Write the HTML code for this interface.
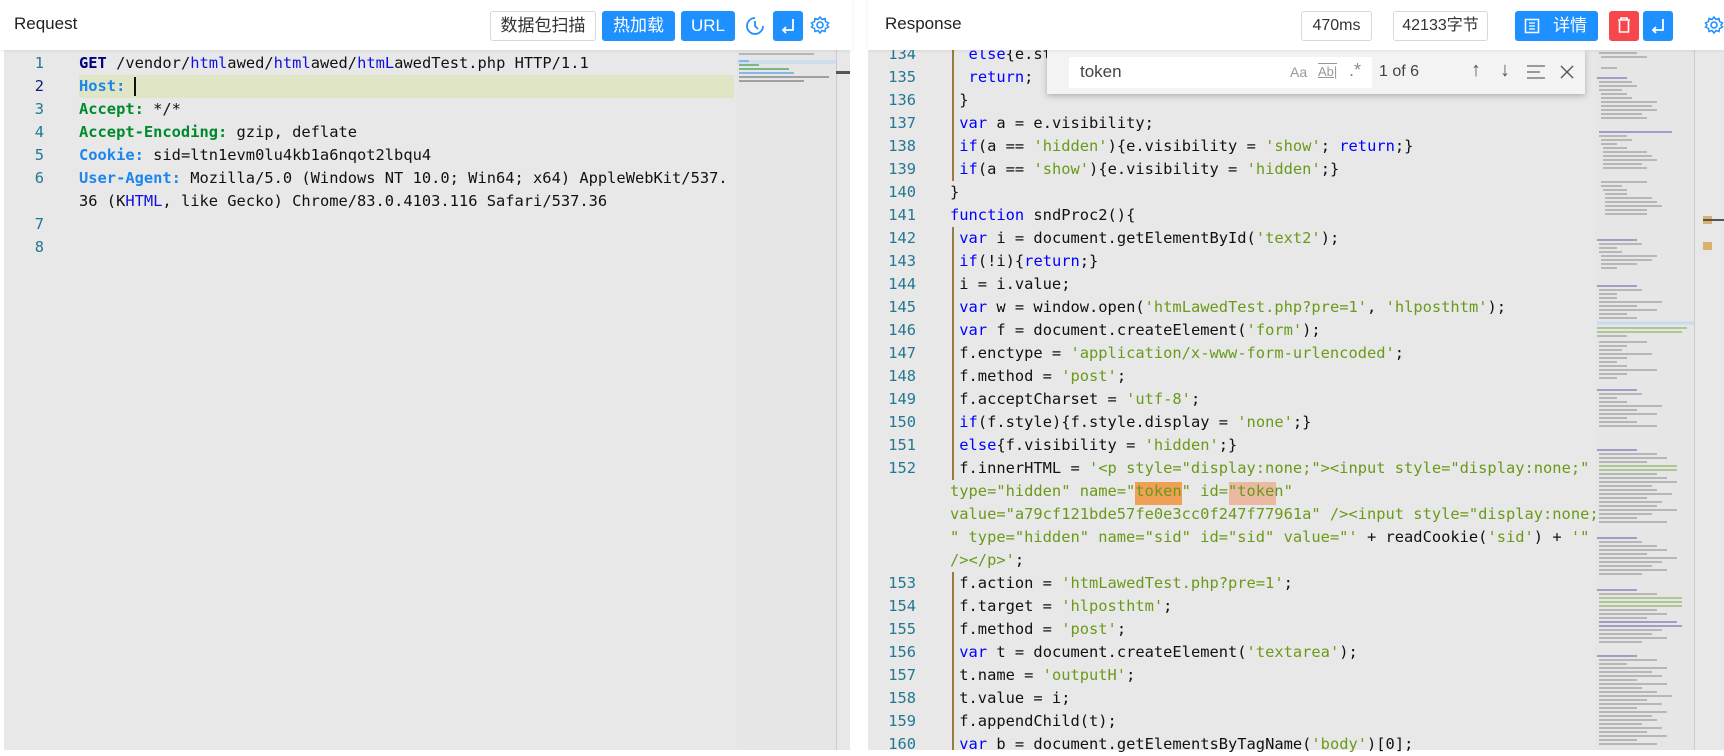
<!DOCTYPE html>
<html><head><meta charset="utf-8">
<style>
*{box-sizing:border-box;margin:0;padding:0}
body{width:1724px;height:750px;overflow:hidden;background:#fff;font-family:"Liberation Sans","Noto Sans CJK SC",sans-serif;position:relative}
.hdr{position:absolute;top:0;height:50px;background:#fff;box-shadow:0 1px 3px rgba(0,0,0,.08);z-index:5}
.title{position:absolute;top:14px;font-size:17px;color:#222}
.btn{position:absolute;top:11px;height:30px;border-radius:3px;font-size:17px;line-height:30px;text-align:center;color:#fff;background:#1e90ff}
.wbtn{background:#fff;color:#333;border:1px solid #d8d8d8;line-height:28px}
.ed{position:absolute;top:50px;bottom:0;background:#e8e8e8;overflow:hidden}
.mono{font-family:"DejaVu Sans Mono","Liberation Mono",monospace;font-size:15.4px;white-space:pre;position:absolute;height:23px;line-height:23px;color:#111}
.ln{font-family:"DejaVu Sans Mono","Liberation Mono",monospace;font-size:15.4px;position:absolute;height:23px;line-height:23px;color:#237893;text-align:right}
.k{color:#0000ff}.s{color:#6a9a1a}.g{color:#008a2e;font-weight:bold}.b{color:#1c86ee;font-weight:bold}.n{color:#000080;font-weight:bold}.u{color:#1010e0}
.gd{position:absolute;left:952px;width:1.5px;height:23px;background:#9a7a44}
</style></head><body>

<!-- LEFT -->
<div class="hdr" style="left:0;width:852px">
 <div class="title" style="left:14px">Request</div>
 <div class="btn wbtn" style="left:490px;width:106px">数据包扫描</div>
 <div class="btn" style="left:602px;width:73px">热加载</div>
 <div class="btn" style="left:681px;width:54px">URL</div>
 <svg style="position:absolute;left:745px;top:16px" width="20" height="20" viewBox="0 0 20 20"><path d="M10 2a8 8 0 1 0 8 8" fill="none" stroke="#1e90ff" stroke-width="1.8"/><path d="M10 5v5l3 3" fill="none" stroke="#1e90ff" stroke-width="1.8"/></svg>
 <div class="btn" style="left:773px;width:30px"><svg width="30" height="30" viewBox="0 0 30 30"><path d="M20 8v11H10M13 16l-3 3 3 3" fill="none" stroke="#fff" stroke-width="1.8"/></svg></div>
 <svg style="position:absolute;left:810px;top:15px" width="20" height="20" viewBox="0 0 20 20"><circle cx="10" cy="10" r="3" fill="none" stroke="#1e90ff" stroke-width="1.6"/><path d="M10 2l2 2.5 3-1 .5 3 3 1.5-1.5 2 1.5 2-3 1.5-.5 3-3-1-2 2.5-2-2.5-3 1-.5-3-3-1.5 1.5-2-1.5-2 3-1.5.5-3 3 1z" fill="none" stroke="#1e90ff" stroke-width="1.5"/></svg>
</div>
<div class="ed" style="left:4px;width:846px">
 <div style="position:absolute;left:75px;top:25px;width:655px;height:23px;background:#e0e5c6"></div>
 <div style="position:absolute;left:130px;top:27px;width:2px;height:19px;background:#111"></div>
 <div style="position:absolute;left:733px;top:0;width:99px;height:700px;background:#e6e6e6"></div>
 <div style="position:absolute;left:733px;top:10px;width:99px;height:4px;background:#cfdff0"></div>
 <svg style="position:absolute;left:735px;top:2px" width="95" height="30"><g stroke-width="1.2"><line x1="0" y1="2" x2="75" y2="2" stroke="#99a"/><line x1="0" y1="9" x2="10" y2="9" stroke="#4a9ee8"/><line x1="0" y1="13" x2="20" y2="13" stroke="#3a9a50"/><line x1="0" y1="17" x2="50" y2="17" stroke="#3a9a50"/><line x1="0" y1="21" x2="55" y2="21" stroke="#4a9ee8"/><line x1="0" y1="25" x2="90" y2="25" stroke="#777"/><line x1="0" y1="29" x2="65" y2="29" stroke="#777"/></g></svg>
 <div style="position:absolute;left:832px;top:0;width:1px;height:700px;background:#ccc"></div>
 <div style="position:absolute;left:832px;top:21px;width:14px;height:3px;background:#555"></div>
 <div class="ln" style="left:0;width:40px;top:2px">1</div>
 <div class="ln" style="left:0;width:40px;top:25px;color:#0b216f">2</div>
 <div class="ln" style="left:0;width:40px;top:48px">3</div>
 <div class="ln" style="left:0;width:40px;top:71px">4</div>
 <div class="ln" style="left:0;width:40px;top:94px">5</div>
 <div class="ln" style="left:0;width:40px;top:117px">6</div>
 <div class="ln" style="left:0;width:40px;top:163px">7</div>
 <div class="ln" style="left:0;width:40px;top:186px">8</div>
 <div class="mono" style="left:75px;top:2px"><span class="n">GET</span> /vendor/<span class="u">html</span>awed/<span class="u">html</span>awed/<span class="u">htmL</span>awedTest.php HTTP/1.1</div>
 <div class="mono" style="left:75px;top:25px"><span class="b">Host:</span> </div>
 <div class="mono" style="left:75px;top:48px"><span class="g">Accept:</span> */*</div>
 <div class="mono" style="left:75px;top:71px"><span class="g">Accept-Encoding:</span> gzip, deflate</div>
 <div class="mono" style="left:75px;top:94px"><span class="b">Cookie:</span> sid=ltn1evm0lu4kb1a6nqot2lbqu4</div>
 <div class="mono" style="left:75px;top:117px"><span class="b">User-Agent:</span> Mozilla/5.0 (Windows NT 10.0; Win64; x64) AppleWebKit/537.</div>
 <div class="mono" style="left:75px;top:140px">36 (K<span class="u">HTML</span>, like Gecko) Chrome/83.0.4103.116 Safari/537.36</div>
</div>

<!-- RIGHT -->
<div class="ed" style="left:868px;width:856px;background:#e8e8e8"></div>
<div style="position:absolute;left:0;top:0;width:1724px;height:750px">
 <div style="position:absolute;left:1595px;top:50px;width:99px;height:700px;background:#e6e6e6"></div>
 <svg style="position:absolute;left:1597px;top:50px" width="97" height="700"><g stroke="#888" stroke-width="1">
  <line x1="2" y1="3" x2="40" y2="3"/><line x1="4" y1="7" x2="50" y2="7"/><line x1="4" y1="18" x2="20" y2="18"/>
  <line x1="0" y1="28" x2="30" y2="28" stroke="#55a"/><line x1="2" y1="32" x2="35" y2="32"/><line x1="2" y1="36" x2="40" y2="36"/><line x1="2" y1="40" x2="25" y2="40"/><line x1="4" y1="44" x2="30" y2="44"/><line x1="4" y1="48" x2="35" y2="48"/><line x1="4" y1="52" x2="60" y2="52"/><line x1="4" y1="56" x2="55" y2="56"/><line x1="4" y1="60" x2="60" y2="60"/><line x1="4" y1="64" x2="45" y2="64"/><line x1="4" y1="68" x2="50" y2="68"/>
  <line x1="2" y1="82" x2="75" y2="82" stroke="#55a"/><line x1="2" y1="86" x2="30" y2="86"/><line x1="4" y1="90" x2="35" y2="90"/><line x1="4" y1="94" x2="20" y2="94"/><line x1="6" y1="98" x2="30" y2="98"/><line x1="6" y1="102" x2="50" y2="102"/><line x1="6" y1="106" x2="55" y2="106"/><line x1="6" y1="110" x2="60" y2="110"/><line x1="6" y1="114" x2="45" y2="114"/><line x1="6" y1="118" x2="50" y2="118"/>
  <line x1="4" y1="132" x2="50" y2="132"/><line x1="4" y1="136" x2="25" y2="136"/><line x1="6" y1="140" x2="30" y2="140"/><line x1="8" y1="144" x2="30" y2="144"/><line x1="8" y1="148" x2="55" y2="148"/><line x1="8" y1="152" x2="60" y2="152"/><line x1="8" y1="156" x2="65" y2="156"/><line x1="8" y1="160" x2="50" y2="160"/><line x1="8" y1="164" x2="50" y2="164"/>
  <line x1="0" y1="190" x2="40" y2="190" stroke="#55a"/><line x1="2" y1="194" x2="45" y2="194"/><line x1="2" y1="198" x2="20" y2="198"/><line x1="2" y1="202" x2="25" y2="202"/><line x1="4" y1="206" x2="60" y2="206"/><line x1="4" y1="210" x2="55" y2="210"/><line x1="4" y1="214" x2="40" y2="214"/><line x1="4" y1="218" x2="20" y2="218"/>
  <line x1="0" y1="236" x2="40" y2="236" stroke="#55a"/><line x1="2" y1="240" x2="45" y2="240"/><line x1="2" y1="244" x2="20" y2="244"/><line x1="2" y1="248" x2="20" y2="248"/><line x1="2" y1="252" x2="65" y2="252"/><line x1="2" y1="256" x2="40" y2="256"/><line x1="2" y1="260" x2="60" y2="260"/><line x1="2" y1="264" x2="30" y2="264"/><line x1="2" y1="268" x2="40" y2="268"/>
  <line x1="0" y1="273" x2="97" y2="273" stroke="#c8dcef" stroke-width="3"/><line x1="0" y1="278" x2="90" y2="278" stroke="#7a4"/><line x1="0" y1="282" x2="85" y2="282" stroke="#7a4"/><line x1="0" y1="286" x2="30" y2="286"/>
  <line x1="2" y1="292" x2="50" y2="292"/><line x1="2" y1="296" x2="30" y2="296"/><line x1="2" y1="300" x2="25" y2="300"/><line x1="2" y1="304" x2="55" y2="304"/><line x1="2" y1="308" x2="30" y2="308"/><line x1="2" y1="312" x2="20" y2="312"/><line x1="2" y1="316" x2="30" y2="316"/><line x1="2" y1="320" x2="60" y2="320"/><line x1="2" y1="324" x2="30" y2="324"/><line x1="2" y1="328" x2="20" y2="328"/>
  <line x1="0" y1="340" x2="40" y2="340" stroke="#55a"/><line x1="2" y1="344" x2="45" y2="344"/><line x1="2" y1="348" x2="20" y2="348"/><line x1="2" y1="352" x2="30" y2="352"/><line x1="2" y1="356" x2="65" y2="356"/><line x1="2" y1="360" x2="40" y2="360"/><line x1="2" y1="364" x2="60" y2="364"/><line x1="2" y1="368" x2="30" y2="368"/><line x1="2" y1="372" x2="40" y2="372"/><line x1="2" y1="376" x2="60" y2="376"/>
  <line x1="0" y1="400" x2="40" y2="400" stroke="#55a"/><line x1="2" y1="404" x2="60" y2="404"/><line x1="2" y1="408" x2="70" y2="408"/><line x1="2" y1="412" x2="50" y2="412"/><line x1="2" y1="416" x2="80" y2="416" stroke="#7a4"/><line x1="2" y1="420" x2="80" y2="420" stroke="#7a4"/><line x1="2" y1="424" x2="60" y2="424"/><line x1="2" y1="428" x2="70" y2="428"/><line x1="2" y1="432" x2="80" y2="432"/><line x1="2" y1="436" x2="55" y2="436"/><line x1="2" y1="440" x2="60" y2="440"/><line x1="2" y1="444" x2="75" y2="444"/><line x1="2" y1="448" x2="50" y2="448"/><line x1="2" y1="452" x2="65" y2="452"/><line x1="2" y1="456" x2="60" y2="456"/><line x1="2" y1="460" x2="80" y2="460"/><line x1="2" y1="464" x2="55" y2="464"/><line x1="2" y1="468" x2="40" y2="468"/><line x1="2" y1="472" x2="70" y2="472"/>
  <line x1="0" y1="488" x2="40" y2="488" stroke="#55a"/><line x1="2" y1="492" x2="45" y2="492"/><line x1="2" y1="496" x2="60" y2="496"/><line x1="2" y1="500" x2="70" y2="500"/><line x1="2" y1="504" x2="50" y2="504"/><line x1="2" y1="508" x2="80" y2="508"/><line x1="2" y1="512" x2="65" y2="512"/><line x1="2" y1="516" x2="55" y2="516"/><line x1="2" y1="520" x2="70" y2="520"/><line x1="2" y1="524" x2="45" y2="524"/>
  <line x1="0" y1="540" x2="40" y2="540" stroke="#55a"/><line x1="2" y1="544" x2="60" y2="544"/><line x1="2" y1="548" x2="85" y2="548" stroke="#7a4"/><line x1="2" y1="552" x2="85" y2="552" stroke="#7a4"/><line x1="2" y1="556" x2="85" y2="556" stroke="#7a4"/><line x1="2" y1="560" x2="60" y2="560"/><line x1="2" y1="564" x2="70" y2="564"/><line x1="2" y1="568" x2="50" y2="568"/><line x1="2" y1="572" x2="80" y2="572" stroke="#55a"/><line x1="2" y1="576" x2="85" y2="576" stroke="#55a"/><line x1="2" y1="580" x2="65" y2="580"/><line x1="2" y1="584" x2="55" y2="584"/><line x1="2" y1="588" x2="70" y2="588"/><line x1="2" y1="592" x2="45" y2="592"/>
  <line x1="0" y1="606" x2="40" y2="606" stroke="#55a"/><line x1="2" y1="610" x2="60" y2="610"/><line x1="2" y1="614" x2="30" y2="614"/><line x1="2" y1="618" x2="70" y2="618"/><line x1="2" y1="622" x2="55" y2="622"/><line x1="2" y1="626" x2="65" y2="626"/><line x1="2" y1="630" x2="40" y2="630"/><line x1="2" y1="634" x2="70" y2="634"/><line x1="2" y1="638" x2="45" y2="638"/><line x1="2" y1="642" x2="60" y2="642"/><line x1="2" y1="646" x2="75" y2="646"/><line x1="2" y1="650" x2="50" y2="650"/><line x1="2" y1="654" x2="65" y2="654"/><line x1="2" y1="658" x2="40" y2="658"/><line x1="2" y1="662" x2="70" y2="662"/><line x1="2" y1="666" x2="55" y2="666"/><line x1="2" y1="670" x2="60" y2="670"/><line x1="2" y1="674" x2="45" y2="674"/><line x1="2" y1="678" x2="65" y2="678"/><line x1="2" y1="682" x2="50" y2="682"/><line x1="2" y1="686" x2="70" y2="686"/><line x1="2" y1="690" x2="40" y2="690"/><line x1="2" y1="694" x2="60" y2="694"/>
 </g></svg>
 <div style="position:absolute;left:1694px;top:50px;width:1px;height:700px;background:#ccc"></div>
 <div style="position:absolute;left:1703px;top:216px;width:9px;height:8px;background:#d8b070"></div>
 <div style="position:absolute;left:1703px;top:219px;width:21px;height:2px;background:#555"></div>
 <div style="position:absolute;left:1703px;top:242px;width:9px;height:8px;background:#d8b070"></div>

 <div class="ln" style="left:870px;width:46px;top:43px">134</div>
 <div class="ln" style="left:870px;width:46px;top:66px">135</div>
 <div class="ln" style="left:870px;width:46px;top:89px">136</div>
 <div class="ln" style="left:870px;width:46px;top:112px">137</div>
 <div class="ln" style="left:870px;width:46px;top:135px">138</div>
 <div class="ln" style="left:870px;width:46px;top:158px">139</div>
 <div class="ln" style="left:870px;width:46px;top:181px">140</div>
 <div class="ln" style="left:870px;width:46px;top:204px">141</div>
 <div class="ln" style="left:870px;width:46px;top:227px">142</div>
 <div class="ln" style="left:870px;width:46px;top:250px">143</div>
 <div class="ln" style="left:870px;width:46px;top:273px">144</div>
 <div class="ln" style="left:870px;width:46px;top:296px">145</div>
 <div class="ln" style="left:870px;width:46px;top:319px">146</div>
 <div class="ln" style="left:870px;width:46px;top:342px">147</div>
 <div class="ln" style="left:870px;width:46px;top:365px">148</div>
 <div class="ln" style="left:870px;width:46px;top:388px">149</div>
 <div class="ln" style="left:870px;width:46px;top:411px">150</div>
 <div class="ln" style="left:870px;width:46px;top:434px">151</div>
 <div class="ln" style="left:870px;width:46px;top:457px">152</div>
 <div class="ln" style="left:870px;width:46px;top:572px">153</div>
 <div class="ln" style="left:870px;width:46px;top:595px">154</div>
 <div class="ln" style="left:870px;width:46px;top:618px">155</div>
 <div class="ln" style="left:870px;width:46px;top:641px">156</div>
 <div class="ln" style="left:870px;width:46px;top:664px">157</div>
 <div class="ln" style="left:870px;width:46px;top:687px">158</div>
 <div class="ln" style="left:870px;width:46px;top:710px">159</div>
 <div class="ln" style="left:870px;width:46px;top:733px">160</div>

 <div class="gd" style="top:43px;height:138px"></div>
 <div class="gd" style="top:227px;height:253px"></div>
 <div class="gd" style="top:572px;height:178px"></div>

 <div style="position:absolute;left:1135px;top:482px;width:47px;height:23px;background:#efa055"></div>
 <div style="position:absolute;left:1229px;top:482px;width:47px;height:23px;background:#e9b9a2"></div>

 <div class="mono" style="left:950px;top:43px">  <span class="k">else</span>{e.style.display = <span class="s">'none'</span>;}</div>
 <div class="mono" style="left:950px;top:66px">  <span class="k">return</span>;</div>
 <div class="mono" style="left:950px;top:89px"> }</div>
 <div class="mono" style="left:950px;top:112px"> <span class="k">var</span> a = e.visibility;</div>
 <div class="mono" style="left:950px;top:135px"> <span class="k">if</span>(a == <span class="s">'hidden'</span>){e.visibility = <span class="s">'show'</span>; <span class="k">return</span>;}</div>
 <div class="mono" style="left:950px;top:158px"> <span class="k">if</span>(a == <span class="s">'show'</span>){e.visibility = <span class="s">'hidden'</span>;}</div>
 <div class="mono" style="left:950px;top:181px">}</div>
 <div class="mono" style="left:950px;top:204px"><span class="k">function</span> sndProc2(){</div>
 <div class="mono" style="left:950px;top:227px"> <span class="k">var</span> i = document.getElementById(<span class="s">'text2'</span>);</div>
 <div class="mono" style="left:950px;top:250px"> <span class="k">if</span>(!i){<span class="k">return</span>;}</div>
 <div class="mono" style="left:950px;top:273px"> i = i.value;</div>
 <div class="mono" style="left:950px;top:296px"> <span class="k">var</span> w = window.open(<span class="s">'htmLawedTest.php?pre=1'</span>, <span class="s">'hlposthtm'</span>);</div>
 <div class="mono" style="left:950px;top:319px"> <span class="k">var</span> f = document.createElement(<span class="s">'form'</span>);</div>
 <div class="mono" style="left:950px;top:342px"> f.enctype = <span class="s">'application/x-www-form-urlencoded'</span>;</div>
 <div class="mono" style="left:950px;top:365px"> f.method = <span class="s">'post'</span>;</div>
 <div class="mono" style="left:950px;top:388px"> f.acceptCharset = <span class="s">'utf-8'</span>;</div>
 <div class="mono" style="left:950px;top:411px"> <span class="k">if</span>(f.style){f.style.display = <span class="s">'none'</span>;}</div>
 <div class="mono" style="left:950px;top:434px"> <span class="k">else</span>{f.visibility = <span class="s">'hidden'</span>;}</div>
 <div class="mono" style="left:950px;top:457px"> f.innerHTML = <span class="s">'&lt;p style="display:none;"&gt;&lt;input style="display:none;"</span></div>
 <div class="mono s" style="left:950px;top:480px">type="hidden" name="token" id="token"</div>
 <div class="mono s" style="left:950px;top:503px">value="a79cf121bde57fe0e3cc0f247f77961a" /&gt;&lt;input style="display:none;</div>
 <div class="mono" style="left:950px;top:526px"><span class="s">" type="hidden" name="sid" id="sid" value="'</span> + readCookie(<span class="s">'sid'</span>) + <span class="s">'"</span></div>
 <div class="mono" style="left:950px;top:549px"><span class="s">/&gt;&lt;/p&gt;'</span>;</div>
 <div class="mono" style="left:950px;top:572px"> f.action = <span class="s">'htmLawedTest.php?pre=1'</span>;</div>
 <div class="mono" style="left:950px;top:595px"> f.target = <span class="s">'hlposthtm'</span>;</div>
 <div class="mono" style="left:950px;top:618px"> f.method = <span class="s">'post'</span>;</div>
 <div class="mono" style="left:950px;top:641px"> <span class="k">var</span> t = document.createElement(<span class="s">'textarea'</span>);</div>
 <div class="mono" style="left:950px;top:664px"> t.name = <span class="s">'outputH'</span>;</div>
 <div class="mono" style="left:950px;top:687px"> t.value = i;</div>
 <div class="mono" style="left:950px;top:710px"> f.appendChild(t);</div>
 <div class="mono" style="left:950px;top:733px"> <span class="k">var</span> b = document.getElementsByTagName(<span class="s">'body'</span>)[0];</div>

 <!-- find widget -->
 <div style="position:absolute;left:1047px;top:50px;width:538px;height:44px;background:#f3f3f3;box-shadow:0 2px 6px rgba(0,0,0,.25);z-index:4">
  <div style="position:absolute;left:22px;top:7px;width:303px;height:31px;background:#fff"></div>
  <div style="position:absolute;left:33px;top:12px;font-size:17px;color:#444">token</div>
  <div style="position:absolute;left:243px;top:14px;font-size:14px;color:#999">Aa</div>
  <div style="position:absolute;left:271px;top:13px;font-size:13px;color:#999;text-decoration:underline;border-top:1px solid #999;line-height:15px">Ab|</div>
  <div style="position:absolute;left:302px;top:10px;font-size:18px;color:#888">.*</div>
  <div style="position:absolute;left:332px;top:13px;font-size:16px;color:#444">1 of 6</div>
  <div style="position:absolute;left:424px;top:9px;font-size:20px;color:#555">↑</div>
  <div style="position:absolute;left:453px;top:9px;font-size:20px;color:#555">↓</div>
  <svg style="position:absolute;left:479px;top:14px" width="20" height="16"><path d="M1 2h18M1 8h13M1 14h18" stroke="#666" stroke-width="1.3"/></svg>
  <svg style="position:absolute;left:513px;top:15px" width="14" height="14"><path d="M1 1l12 12M13 1L1 13" stroke="#555" stroke-width="1.4"/></svg>
 </div>
</div>

<div class="hdr" style="left:868px;width:856px">
 <div class="title" style="left:17px">Response</div>
 <div class="btn wbtn" style="left:433px;width:71px;font-size:16px">470ms</div>
 <div class="btn wbtn" style="left:525px;width:95px;font-size:16px">42133字节</div>
 <div class="btn" style="left:647px;width:83px"><svg style="position:absolute;left:9px;top:7px" width="16" height="16"><rect x="1.5" y="1.5" width="13" height="13" fill="none" stroke="#fff" stroke-width="1.5"/><path d="M5 5h6M5 8h6M5 11h6" stroke="#fff" stroke-width="1.3"/></svg><span style="position:absolute;left:38px">详情</span></div>
 <div class="btn" style="left:741px;width:30px;background:#f5474c"><svg width="30" height="30"><path d="M9 9h12M12 9V7h6v2M10.5 10v11h9V10" fill="none" stroke="#fff" stroke-width="1.6"/></svg></div>
 <div class="btn" style="left:775px;width:30px"><svg width="30" height="30"><path d="M20 8v11H10M13 16l-3 3 3 3" fill="none" stroke="#fff" stroke-width="1.8"/></svg></div>
 <svg style="position:absolute;left:836px;top:15px" width="20" height="20" viewBox="0 0 20 20"><circle cx="10" cy="10" r="3" fill="none" stroke="#1e90ff" stroke-width="1.6"/><path d="M10 2l2 2.5 3-1 .5 3 3 1.5-1.5 2 1.5 2-3 1.5-.5 3-3-1-2 2.5-2-2.5-3 1-.5-3-3-1.5 1.5-2-1.5-2 3-1.5.5-3 3 1z" fill="none" stroke="#1e90ff" stroke-width="1.5"/></svg>
</div>
</body></html>
